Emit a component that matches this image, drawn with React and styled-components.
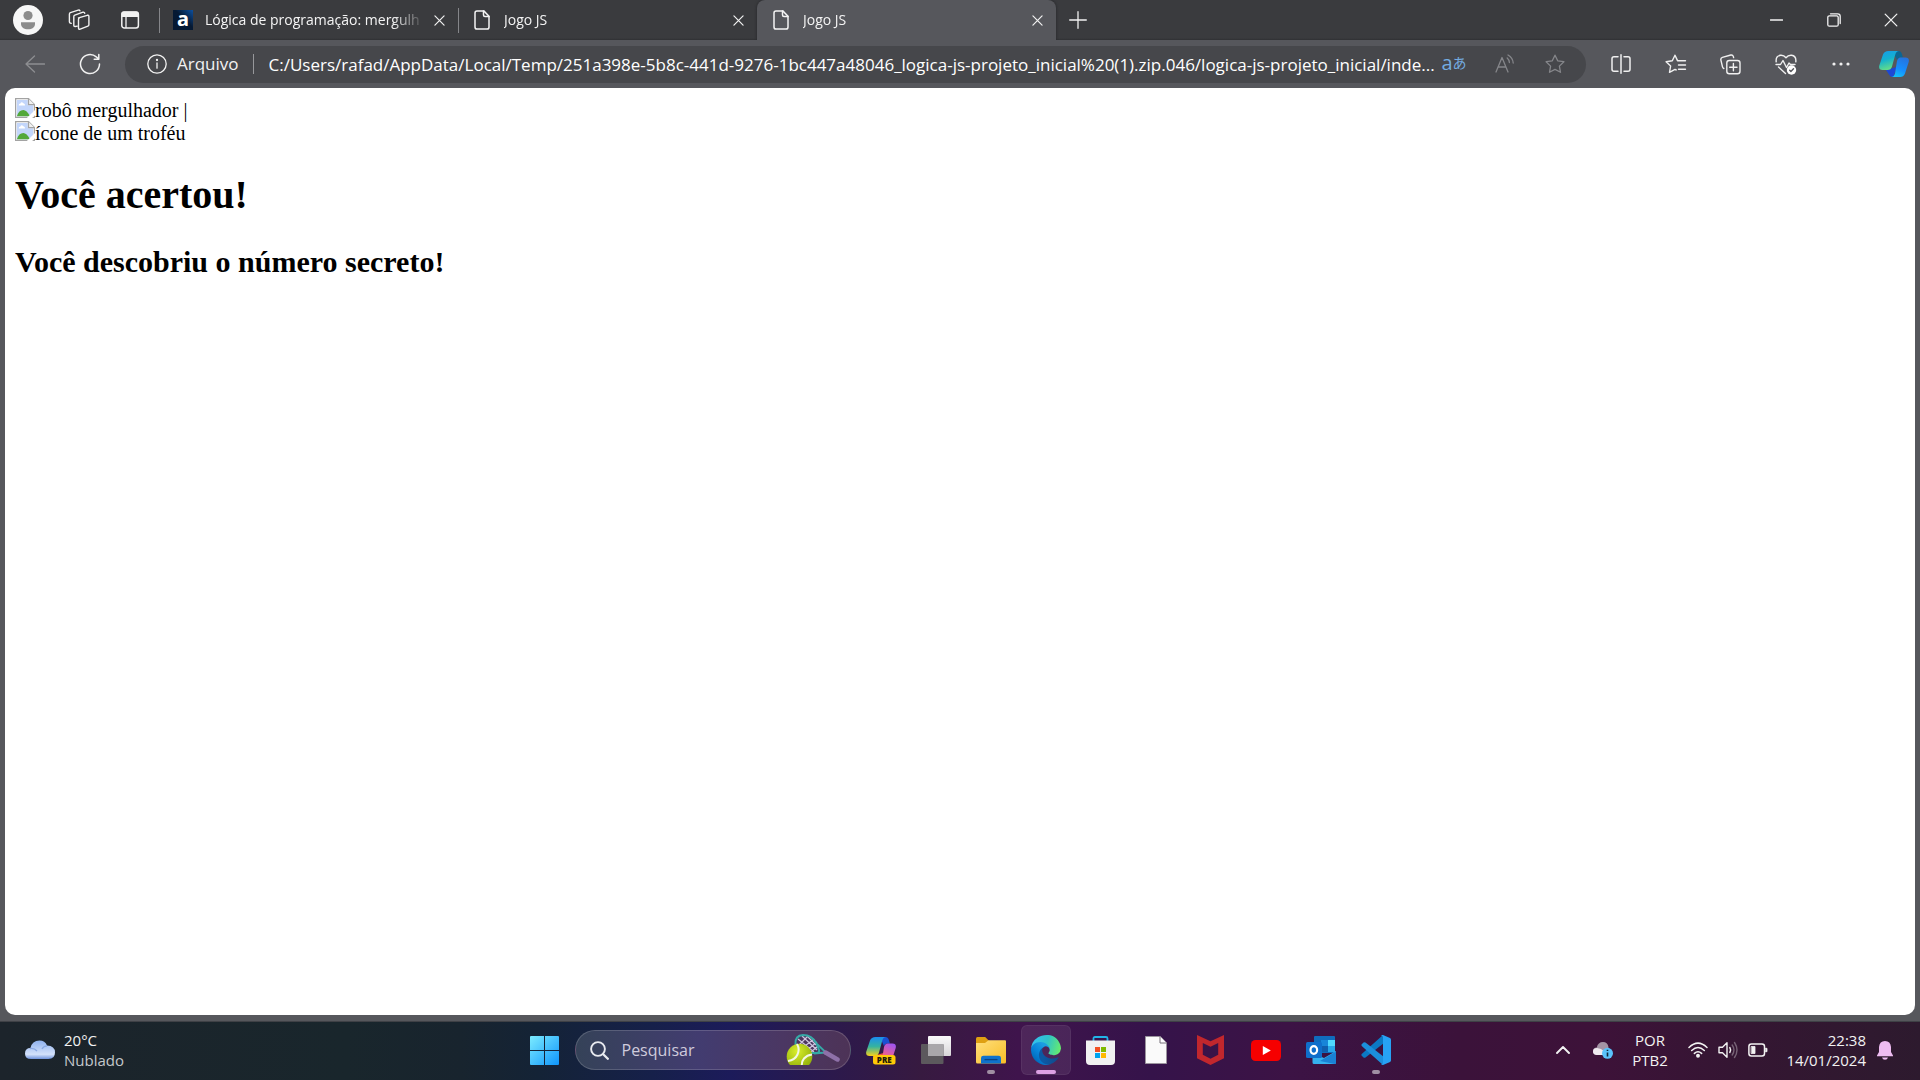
import React from "react";
import styled, { createGlobalStyle, css } from "styled-components";

const ui = '"Open Sans", "Noto Sans", sans-serif';

const GlobalStyle = createGlobalStyle`
  * { box-sizing: border-box; }
  body { margin: 0; background: #56575c; font-family: ${ui}; }
  svg { display: block; flex: none; }
  button, input { font: inherit; color: inherit; }
`;

/* ---------- shared parts ---------- */

const Window = styled.div`
  display: flex;
  flex-direction: column;
  height: 100vh;
  overflow: hidden;
`;

const PlainButton = styled.button`
  display: flex;
  align-items: center;
  justify-content: center;
  flex: none;
  padding: 0;
  border: 0;
  background: transparent;
  color: #f2f2f2;
`;

/* ---------- tab strip ---------- */

const TabStrip = styled.header`
  display: flex;
  height: 40px;
  flex: none;
  background: linear-gradient(#3a3b3e 0 38px, #2f3033);
  color: #f4f4f4;
`;

const StripTools = styled.div`
  display: flex;
  align-items: center;
  padding-left: 2px;
  width: 159px;
  flex: none;
`;

const StripButton = styled(PlainButton)`
  width: 51px;
  height: 40px;
`;

const Tabs = styled.div`
  display: flex;
  flex: 0 1 897px;
  min-width: 0;
`;

const Tab = styled.div`
  display: flex;
  align-items: center;
  flex: 1 1 0;
  min-width: 0;
  padding: 0 7px 0 14px;
  gap: 12px;
  position: relative;
  font-size: 14px;
  line-height: 20px;
  ${(p) =>
    p.$divider &&
    css`
      &::before {
        content: "";
        position: absolute;
        left: 0;
        top: 8px;
        width: 1px;
        height: 25px;
        background: #85868a;
      }
    `}
  ${(p) =>
    p.$active &&
    css`
      background: #56575c;
      border-radius: 8px 8px 0 0;
      box-shadow: 0 0 3px #222326;
      clip-path: inset(0 -4px 0 -4px);
    `}
`;

const TabTitle = styled.span`
  flex: 1;
  min-width: 0;
  white-space: nowrap;
  mask-image: linear-gradient(to right, #000 calc(100% - 32px), transparent);
`;

const TabClose = styled(PlainButton)`
  width: 24px;
  height: 24px;
  margin-left: -10px;
`;

const Favicon = styled.span`
  display: flex;
  align-items: center;
  justify-content: center;
  width: 20px;
  height: 20px;
  flex: none;
  background: linear-gradient(225deg, #0c50a0, #051933 45%);
  color: #fff;
  font: 700 20px/20px "Noto Sans", sans-serif;
  padding-bottom: 3px;
`;

const FileSlot = styled.span`
  display: flex;
  justify-content: center;
  width: 20px;
  flex: none;
`;

const NewTab = styled(PlainButton)`
  width: 44px;
  height: 40px;
`;

const WindowButtons = styled.div`
  display: flex;
  margin-left: auto;
  padding-right: 1px;
`;

const WindowButton = styled(PlainButton)`
  width: 57px;
  height: 39px;
`;

/* ---------- address toolbar ---------- */

const Toolbar = styled.nav`
  display: flex;
  align-items: center;
  height: 48px;
  flex: none;
  padding: 0 0 0 7px;
  background: #56575c;
`;

const ToolButton = styled(PlainButton)`
  width: ${(p) => (p.$edge ? 52 : 55)}px;
  height: 38px;
  color: ${(p) => (p.$dim ? "#8d8e91" : "#f0f0f0")};
`;

const BarButton = styled(PlainButton)`
  width: 50px;
  height: 36px;
  color: #85868a;
`;

const TranslateButton = styled(PlainButton)`
  width: 32px;
  height: 36px;
  margin-right: 10px;
  padding-bottom: 3px;
  color: #74ace0;
  font: 20px/24px "Open Sans", "Noto Sans CJK JP", sans-serif;

  small {
    font-size: 14px;
  }
`;

const AddressBar = styled.form`
  display: flex;
  align-items: center;
  flex: 1;
  min-width: 0;
  height: 37px;
  margin: 0 7px 0 8px;
  padding: 0 6px 0 22px;
  border-radius: 19px;
  background: #46474b;
  color: #fff;
  font-size: 17px;
  line-height: 24px;
`;

const SiteInfo = styled(PlainButton)`
  gap: 10px;
  padding-right: 14px;
  font-size: 17px;
  line-height: 24px;
`;

const BarDivider = styled.span`
  width: 1px;
  height: 20px;
  flex: none;
  margin-right: 15px;
  background: #97989b;
`;

const UrlInput = styled.input`
  flex: 1;
  min-width: 0;
  height: 30px;
  padding: 0;
  border: 0;
  outline: 0;
  background: transparent;
  font-size: 17px;
`;

/* ---------- page ---------- */

const PageFrame = styled.div`
  display: flex;
  flex: 1;
  min-height: 0;
  padding: 0 5px 6px;
  background: #56575c;
`;

const Page = styled.main`
  flex: 1;
  overflow: auto;
  padding: 10px;
  border-radius: 10px;
  background: #fff;
  color: #000;
  font: 20px/25px "Liberation Serif", serif;
`;

const ImageLine = styled.div`
  display: flex;
  height: 23px;

  span {
    white-space: pre;
  }
`;

const Title = styled.h1`
  margin: 28px 0 27px;
  font-size: 40px;
  line-height: 46px;
`;

const Subtitle = styled.h2`
  margin: 0;
  font-size: 30px;
  line-height: 34px;
`;

/* ---------- taskbar ---------- */

const Taskbar = styled.footer`
  display: grid;
  grid-template-columns: 1fr auto 1fr;
  align-items: center;
  height: 59px;
  flex: none;
  padding-bottom: 2px;
  color: #fff;
  border-top: 1px solid #3f4146;
  background: linear-gradient(
    to right,
    #1c242b 0,
    #19262c 18%,
    #18242e 24%,
    #142336 28%,
    #16204a 34%,
    #1c1b5a 38%,
    #2b194d 43%,
    #371a40 48%,
    #3f144c 53%,
    #35134a 60%,
    #3c1345 67%,
    #3b123a 76%,
    #3d1239 83%,
    #341632 91%,
    #2d1a2e 100%
  );
`;

const Weather = styled(PlainButton)`
  justify-self: start;
  gap: 9px;
  margin-left: 25px;
  text-align: left;
  font-size: 15px;
  line-height: 20px;

  em {
    display: block;
    font-style: normal;
    color: #c4c8cb;
  }
`;

const Dock = styled.div`
  display: flex;
  align-items: center;
  gap: 5px;
`;

const DockButton = styled(PlainButton)`
  position: relative;
  width: 50px;
  height: 50px;
  border-radius: 6px;
  ${(p) =>
    p.$current &&
    css`
      background: rgba(255, 255, 255, 0.08);
      box-shadow: inset 0 0 0 1px rgba(255, 255, 255, 0.06);
    `}
  ${(p) =>
    p.$running &&
    css`
      &::after {
        content: "";
        position: absolute;
        bottom: 1px;
        width: ${p.$current ? 20 : 8}px;
        height: 4px;
        border-radius: 2px;
        background: ${p.$current ? "#dda0e4" : "#a08fa3"};
      }
    `}
`;

const SearchBox = styled.label`
  display: flex;
  align-items: center;
  gap: 13px;
  width: 276px;
  height: 40px;
  padding: 0 10px 0 14px;
  border: 1px solid rgba(255, 255, 255, 0.16);
  border-radius: 20px;
  background: linear-gradient(to right, #354258, #423c70 45%, #4b3763 75%, #4d3357);

  input {
    flex: 1;
    min-width: 0;
    padding: 0;
    border: 0;
    outline: 0;
    background: transparent;
    font-size: 16px;
    line-height: 24px;
  }

  input::placeholder {
    color: #cfcbdc;
    opacity: 1;
  }
`;

const Tray = styled.div`
  display: flex;
  align-items: center;
  justify-self: end;
  padding-right: 16px;
`;

const TrayButton = styled(PlainButton)`
  width: ${(p) => p.$width}px;
  height: 48px;
  gap: 10px;
`;

const TrayText = styled(PlainButton)`
  width: ${(p) => p.$width}px;
  display: block;
  text-align: ${(p) => p.$align};
  font-size: 15px;
  line-height: 20px;

  span {
    display: block;
  }
`;

/* ---------- icons ---------- */

const Line = ({ w = 20, h = 20, sw = 1.3, children, box }) => (
  <svg
    width={w}
    height={h}
    viewBox={box || `0 0 ${w} ${h}`}
    fill="none"
    stroke="currentColor"
    strokeWidth={sw}
    strokeLinecap="round"
    strokeLinejoin="round"
    aria-hidden="true"
  >
    {children}
  </svg>
);

const ProfileIcon = () => (
  <svg width="30" height="30" viewBox="0 0 30 30">
    <circle cx="15" cy="15" r="15" fill="#f7f7f7" />
    <circle cx="15" cy="10.5" r="4.6" fill="#8c8c8c" />
    <path d="M8 17.2h14v1.5c0 3.6-3 5.6-7 5.6s-7-2-7-5.600z" fill="#8c8c8c" />
  </svg>
);

const WorkspacesIcon = () => (
  <Line w={22} h={22} sw={1.4}>
    <path d="M10.500 8.900 19.200 6.300q1.700-.4 1.700 1.200v8.200q0 1.100-1 1.500l-7.700 3q-1.700.5-1.700-1.200v-8.600q0-1.100 1-1.500" />
    <path d="M9.300 17.100 7.300 17.500q-1.500.2-1.500-1.300V7.700q0-1.100 1-1.500l8.200-3q1.400-.3 1.800 1" />
    <path d="M3.200 14.300 2.200 14q-.8-.3-.8-1.300V5.200q0-1.100 1-1.500l7.800-2.600q1.300-.3 1.700.7" />
  </Line>
);

const TabActionsIcon = () => (
  <svg width="20" height="20" viewBox="0 0 20 20">
    <rect x="1.800" y="2" width="16.600" height="16" rx="2.500" fill="none" stroke="#f2f2f2" strokeWidth="1.500" />
    <path d="M1.500 3.500q0-2 2-2h13q2 0 2 2V7h-17z" fill="#f2f2f2" />
    <path d="M6 7v11" stroke="#f2f2f2" strokeWidth="1.300" />
  </svg>
);

const FileIcon = () => (
  <Line w={16} h={20} sw={1.5}>
    <path d="M3 .9h6.800l5.200 5.300V17q0 2.100-2 2.100H3q-2 0-2-2.100V2.900Q1 .9 3 .9z" />
    <path d="M9.500 1v4q0 1.500 1.500 1.500h4" />
  </Line>
);

const CloseIcon = ({ size = 11, sw = 1.3 }) => (
  <Line w={size} h={size} box="0 0 12 12" sw={sw}>
    <path d="m1 1 10 10M11 1 1 11" />
  </Line>
);

const BackIcon = () => (
  <Line w={20} h={18}>
    <path d="M9.500 1 1 9l8.500 8M1 9h18.500" />
  </Line>
);

const RefreshIcon = () => (
  <Line w={22} h={22} sw={1.500}>
    <path d="M20.500 11a9.500 9.500 0 1 1-3.200-7.100L19.800 6M19.800 1.600V6.200h-4.600" />
  </Line>
);

const InfoIcon = () => (
  <Line w={20} h={20}>
    <circle cx="10" cy="10" r="9.200" />
    <path d="M10 9v5.200" />
    <circle cx="10" cy="6" r=".5" fill="currentColor" />
  </Line>
);

const ReadAloudIcon = () => (
  <Line w={20} h={20}>
    <path d="M1 18 7 3.500 13 18M3.200 13h7.600M12.200 4q2 1.700 2.200 4.500M13 1q4.800 2.700 5.200 8" />
  </Line>
);

const starPath = "m10 1.200 2.700 5.600 6.200.9-4.500 4.400 1.100 6.200L10 15.400l-5.500 2.900 1.100-6.200L1.100 7.700l6.200-.9z";

const StarIcon = () => (
  <Line>
    <path d={starPath} />
  </Line>
);

const SplitIcon = () => (
  <Line w={20} h={20} sw={1.500}>
    <path d="M10 .8v18.400M7 2.800H3q-2 0-2 2v10.400q0 2 2 2h4M13 2.800h4q2 0 2 2v10.400q0 2-2 2h-4" />
  </Line>
);

const FavoritesIcon = () => (
  <Line w={22} h={20} sw={1.400}>
    <path d="M12.500 6.600 10 1.200 7.300 6.800l-6.200.9 4.500 4.400-1.100 6.200 5.500-2.900 1.200.6M12.500 6.800H20.500M13.500 11h7M13.500 15.200h7" />
  </Line>
);

const CollectionsIcon = () => (
  <Line w={21} h={21} sw={1.400}>
    <rect x="6.800" y="6.500" width="13.200" height="13.300" rx="2.500" />
    <path d="M13.400 9.500v7.300M9.700 13.200H17M3.800 14.500q-1-.4-1.300-1.600L.9 6.100Q.5 4 2.400 3.400L10.800 1q1.900-.4 2.500 1.400l.3 1.200" />
  </Line>
);

const HealthIcon = () => (
  <svg width="22" height="21" viewBox="0 0 22 21" fill="none" stroke="currentColor" strokeWidth="1.400" strokeLinecap="round" strokeLinejoin="round">
    <path d="M1.200 7.800Q.5 2 5.500 1.300 8.800 1 11 3.800 13.200 1 16.500 1.300 21.500 2 20.800 7.800M3.500 13l7 6.500M1 10.500h4.500L8 6.500l3.500 7L14 9l1.500 1.500H20" />
    <circle cx="16.500" cy="16" r="4.700" fill="#fff" stroke="none" />
    <path d="m14.700 16.200 1.200 1.200 2.600-2.700" stroke="#56575c" />
  </svg>
);

const DotsIcon = () => (
  <svg width="18" height="4" viewBox="0 0 18 4" fill="currentColor">
    <circle cx="2" cy="2" r="1.600" />
    <circle cx="9" cy="2" r="1.600" />
    <circle cx="16" cy="2" r="1.600" />
  </svg>
);

const CopilotIcon = ({ pre }) => {
  const id = pre ? "pre" : "bar";
  return (
    <svg width="30" height="30" viewBox="0 0 30 30">
      <defs>
        <linearGradient id={`${id}-a`} x1="0" y1="0" x2={pre ? 0 : 0.3} y2="1">
          <stop offset="0" stopColor={pre ? "#1a8df0" : "#179bea"} />
          <stop offset=".5" stopColor={pre ? "#35b3a0" : "#14b1cf"} />
          <stop offset="1" stopColor={pre ? "#f6d21c" : "#61dc8b"} />
        </linearGradient>
        <linearGradient id={`${id}-b`} x1=".7" y1="0" x2=".3" y2="1">
          <stop offset="0" stopColor={pre ? "#a155ee" : "#2673dd"} />
          <stop offset=".6" stopColor={pre ? "#ec5f91" : "#158fff"} />
          <stop offset="1" stopColor={pre ? "#ff9c62" : "#15c1f6"} />
        </linearGradient>
      </defs>
      <path d="M14 2h5.500q2.500 0 3.400 3l1 3.500h-3q-2.200 0-3 2.500z" fill={pre ? "#1950d2" : "#0b6693"} />
      <path d="m7 21 3 4.500q1.200 2.500 3.500 2.500h1l3-10z" fill={pre ? "#ef5440" : "#1d48d5"} />
      <path d="M9.500 2H20q-2.800.2-3.700 3.500L13 17.500q-1 3.500-4.500 3.500h-5Q-.7 21 .3 16.500L4 5.500Q5.300 2 9.500 2z" fill={`url(#${id}-a)`} />
      <path d="M21.500 8.500h5q4.200 0 3.200 4.500L26 24.500q-1.300 3.500-5 3.500h-9q3 0 4-3.500L18 12q1-3.500 3.500-3.500z" fill={`url(#${id}-b)`} />
      {pre && (
        <>
          <rect x="7" y="20" width="22.500" height="9.500" rx="2.500" fill="#ffc907" />
          <text x="18.300" y="27.500" textAnchor="middle" fontFamily="Open Sans, sans-serif" fontWeight="800" fontSize="8" fill="#241b09">
            PRE
          </text>
        </>
      )}
    </svg>
  );
};

const BrokenImage = () => (
  <svg width="20" height="20" viewBox="0 0 16 16">
    <path d="M.5.500h10.300l4.700 4.700v10.300H.5z" fill="#fff" stroke="#a3a3a3" />
    <path d="M1.500 1.500h8.700v4.300h4.300v8.700h-13z" fill="#c3d6fb" />
    <path d="M3 6q-.2-1.600 1.300-1.700Q5.200 2.500 6.700 4.200 8.200 4.400 8 6z" fill="#fff" />
    <path d="M1.500 14.500q1.500-5 5.200-5 2.600 0 5.300 5z" fill="#52a83a" />
    <path d="M10.800.5v4.700h4.700" fill="#f2f2f2" stroke="#a3a3a3" />
    <path d="M9 16.500 16.500 9v4.200L13.200 16.500z" fill="#fff" />
  </svg>
);

const CloudIcon = () => (
  <svg width="30" height="20" viewBox="0 0 30 20">
    <defs>
      <linearGradient id="cloud" x1="0" y1="0" x2="0" y2="1">
        <stop offset="0" stopColor="#8fb2ee" />
        <stop offset=".75" stopColor="#d3e1fa" />
        <stop offset="1" stopColor="#6f93dc" />
      </linearGradient>
    </defs>
    <path d="M6 19q-6 0-6-5.500T5.500 8Q7 .5 14.500.5 20 .5 22 5.500q8 .3 8 7T23 19z" fill="url(#cloud)" />
    <path d="M5 8.500q4.500-.5 7 2.500M17 9q1.500-3 5-3.200" stroke="#88a8e3" strokeWidth="1.300" fill="none" />
  </svg>
);

const StartIcon = () => (
  <svg width="29" height="29" viewBox="0 0 29 29">
    <defs>
      <linearGradient id="start" gradientUnits="userSpaceOnUse" x1="0" y1="0" x2="29" y2="29">
        <stop offset="0" stopColor="#7cecff" />
        <stop offset="1" stopColor="#0f95fb" />
      </linearGradient>
    </defs>
    <path d="M1 0h13v14H0V1q0-1 1-1zM15 0h13q1 0 1 1v13H15zM0 15h14v14H1q-1 0-1-1zM15 15h14v13q0 1-1 1H15z" fill="url(#start)" />
  </svg>
);

const SearchIcon = () => (
  <svg width="19" height="19" viewBox="0 0 19 19" fill="none" stroke="#e9ebf0" strokeLinecap="round">
    <circle cx="8" cy="8" r="6.900" strokeWidth="1.900" />
    <path d="m13.200 13.200 4.600 4.600" strokeWidth="2.300" />
  </svg>
);

const TennisIcon = () => (
  <svg width="54" height="32" viewBox="0 0 54 32">
    <defs>
      <radialGradient id="ball" cx=".4" cy=".3" r=".75">
        <stop offset="0" stopColor="#d9ee2b" />
        <stop offset="1" stopColor="#8dab08" />
      </radialGradient>
      <clipPath id="ballClip">
        <rect width="54" height="31" />
      </clipPath>
    </defs>
    <path d="m12 5 16 13M16 2l15 14M21 2l9 9M10 10l10 9M12 12l9-9M15 15 28 5M20 17l11-9M25 18l7-6" stroke="#cfc6df" strokeWidth="1.200" />
    <path d="M9.500 10Q9 1.500 17 1q9 0 13.500 8.500l2.500 6.500q.8 3-2.500 3h-6Q10 19 9.500 10z" fill="none" stroke="#35a9a6" strokeWidth="2" />
    <path d="m31 10 9 8.500L28 19.500" fill="none" stroke="#35a9a6" strokeWidth="1.800" />
    <path d="m39.500 18.500 12 7" stroke="#8e70a8" strokeWidth="4.500" strokeLinecap="round" />
    <g clipPath="url(#ballClip)">
      <circle cx="13.500" cy="22.500" r="12.800" fill="url(#ball)" />
      <path d="M2 27q7-1 9.500-6.500T11 10M16 34q-1-6 2-9.500t8-4" fill="none" stroke="#f3f7e4" strokeWidth="2" />
    </g>
  </svg>
);

const TaskViewIcon = () => (
  <svg width="30" height="28" viewBox="0 0 30 28">
    <defs>
      <linearGradient id="tv" x1="0" y1="0" x2="0" y2="1">
        <stop offset="0" stopColor="#fafafa" />
        <stop offset="1" stopColor="#d8d6d9" />
      </linearGradient>
    </defs>
    <rect x="7" y="0" width="23" height="20" rx="1" fill="url(#tv)" />
    <rect x="0" y="8" width="22.500" height="20" rx="1" fill="#5c595d" />
    <path d="M7 8h15.500v12H7z" fill="#a9a7aa" />
  </svg>
);

const FolderIcon = () => (
  <svg width="30" height="27" viewBox="0 0 30 27">
    <defs>
      <linearGradient id="folder" x1="0" y1="0" x2="1" y2="1">
        <stop offset="0" stopColor="#ffdf7c" />
        <stop offset="1" stopColor="#f8bd26" />
      </linearGradient>
    </defs>
    <path d="M0 1.500Q0 0 1.500 0h7.700l3.500 3.500V10H0z" fill="#dfa012" />
    <path d="M0 6h9l3.500-2.700H29q1 0 1 1V25q0 1.500-1.500 1.500h-27Q0 26.500 0 25z" fill="url(#folder)" />
    <path d="M5 26.500V21q0-2.300 2.500-2.300h15q2.500 0 2.500 2.300v5.500z" fill="#0f72cc" />
    <path d="M8.500 22.600h13" stroke="#0a4383" strokeWidth="1.300" />
  </svg>
);

const EdgeIcon = () => (
  <svg width="30" height="30" viewBox="0 0 256 256">
    <defs>
      <linearGradient id="edge1" x1=".25" y1=".7" x2=".97" y2=".7">
        <stop offset="0" stopColor="#0c59a4" />
        <stop offset="1" stopColor="#114a8b" />
      </linearGradient>
      <linearGradient id="edge2" x1=".8" y1=".3" x2=".3" y2=".95">
        <stop offset="0" stopColor="#1b9de2" />
        <stop offset=".5" stopColor="#0883d9" />
        <stop offset="1" stopColor="#0067b8" />
      </linearGradient>
      <linearGradient id="edge3" x1="0" y1=".4" x2="1" y2=".6">
        <stop offset="0" stopColor="#35c1f1" />
        <stop offset=".5" stopColor="#2ec2c9" />
        <stop offset="1" stopColor="#66eb6e" />
      </linearGradient>
    </defs>
    <path d="M231 190a94 94 0 0 1-11 5 102 102 0 0 1-36 6c-47 0-89-32-89-74a31 31 0 0 1 17-27c-43 2-54 46-54 72 0 74 68 81 82 81 8 0 20-2 27-4l1-1a128 128 0 0 0 67-53 4 4 0 0 0-4-5z" fill="url(#edge1)" />
    <path d="M106 241a79 79 0 0 1-23-21 81 81 0 0 1 29-120c3-1 8-4 15-4a32 32 0 0 1 26 13 32 32 0 0 1 6 19c0 0 25-80-80-80C35 48 0 90 0 126a130 130 0 0 0 12 56 128 128 0 0 0 156 67 75 75 0 0 1-62-8z" fill="url(#edge2)" />
    <path d="M152 149c-1 1-3 3-3 6s2 6 5 8c15 11 44 9 44 9a63 63 0 0 0 32-9 65 65 0 0 0 26-47C256 92 247 76 240 62 196-24 95-1 60 19A128 128 0 0 0 0 126c1-36 37-66 80-66 3 0 23 0 42 10a73 73 0 0 1 31 29c6 11 7 24 7 30 0 5-2 13-8 20z" fill="url(#edge3)" />
  </svg>
);

const StoreIcon = () => (
  <svg width="29" height="29" viewBox="0 0 29 29">
    <path d="M7.500 6V2.500q0-1.500 1.500-1.500h11q1.500 0 1.500 1.500V6" fill="none" stroke="#22b4e8" strokeWidth="1.800" />
    <path d="M0 4.500h29V25q0 4-4 4H4q-4 0-4-4z" fill="#f1f1f1" />
    <path d="M9 11h5v5H9z" fill="#f25022" />
    <path d="M15 11h5v5h-5z" fill="#7fba00" />
    <path d="M9 17h5v5H9z" fill="#00a4ef" />
    <path d="M15 17h5v5h-5z" fill="#ffb900" />
  </svg>
);

const DocumentIcon = () => (
  <svg width="22" height="28" viewBox="0 0 22 28">
    <path d="M.5.500h14.700L21.500 7v20.500H.5z" fill="#fafafa" stroke="#9b949e" />
    <path d="M15 .5V7h6.500" fill="#fff" stroke="#77717a" />
  </svg>
);

const ShieldIcon = () => (
  <svg width="27" height="30" viewBox="0 0 27 30">
    <path d="m0 0 13.500 6.200L27 0v23.300L13.500 30 0 23.300zM5.800 8v11.700l7.700 4 7.700-4V8l-7.700 3.800z" fill="#c1272d" fillRule="evenodd" />
  </svg>
);

const YoutubeIcon = () => (
  <svg width="30" height="21" viewBox="0 0 30 21">
    <rect width="30" height="21" rx="4.500" fill="#f60000" />
    <path d="m11.800 6 8 4.500-8 4.500z" fill="#fff" />
  </svg>
);

const OutlookIcon = () => (
  <svg width="30" height="28" viewBox="0 0 30 28">
    <path d="M8 1q0-1 1-1h19q1 0 1 1v16H8z" fill="#0f6cbd" />
    <path d="M15 4h7v6h-7z" fill="#1785d8" />
    <path d="M22 4h7v6h-7z" fill="#50d9ff" />
    <path d="M15 10h7v6h-7z" fill="#0f5fae" />
    <path d="M22 10h7v6h-7z" fill="#28a8ea" />
    <path d="M6.500 17 18 22l12-7v11.500q0 1.500-1.500 1.500H8q-1.500 0-1.500-1.500z" fill="#35b1ee" />
    <path d="M30 15.500 14 25l14.500 3q1.500 0 1.500-1.500z" fill="#1a82d4" />
    <rect y="6" width="16" height="16" rx="1.500" fill="#0f6fcb" />
    <ellipse cx="7.800" cy="14" rx="3.300" ry="3.800" fill="none" stroke="#fff" strokeWidth="2.200" />
  </svg>
);

const CodeIcon = () => (
  <svg width="30" height="30" viewBox="0 0 30 30">
    <path d="M22 0 1 18.800q-1.300 1.200 0 2.200l1.500 1.500q1 .7 2 0L23 8z" fill="#0b79c4" />
    <path d="M22 30 1 11.200q-1.300-1.200 0-2.200l1.500-1.500q1-.7 2 0L23 22z" fill="#1b8fdc" />
    <path d="M22 0 29 3q1 .5 1 1.700v20.600q0 1.200-1 1.700l-7 3q-1.600.3-2-.5 2 .3 2-1.800V2.300Q22 .2 20 .5q.5-.8 2-.5z" fill="#27a2f4" />
  </svg>
);

const ChevronIcon = () => (
  <Line w={14} h={8} sw={1.900}>
    <path d="m1 7 6-6 6 6" />
  </Line>
);

const CloudInfoIcon = () => (
  <svg width="20" height="17" viewBox="0 0 20 17">
    <path d="M5 12.500H4q-4 0-4-3.500Q0 5.700 3.800 5.500 5 0 10 0q4.500 0 5.500 5v7.500z" fill="#a494a5" />
    <path d="M3.500 13Q0 12.700 0 9.500 0 6 4 6q4 .2 8 4l-1 3z" fill="#efe9ef" />
    <circle cx="14.500" cy="11.300" r="5.500" fill="#5ac2fb" />
    <path d="M14.500 10.500v4M14.500 7.800v1.300" stroke="#10283c" strokeWidth="1.600" />
  </svg>
);

const WifiIcon = () => (
  <Line w={20} h={16} sw={1.500}>
    <path d="M1 5.500q9-8.800 18 0M3.700 8.500q6.300-6 12.600 0M6.400 11.400q3.600-3.400 7.200 0" />
    <circle cx="10" cy="13.800" r="1.200" fill="currentColor" />
  </Line>
);

const VolumeIcon = () => (
  <Line w={20} h={18} sw={1.400}>
    <path d="M1 6.200h3.500l4.500-4.400v14.400l-4.500-4.400H1z" />
    <path d="M11.800 6.500q1.600 2.500 0 5" />
    <path d="M14.200 4q3.500 5 0 10M16.500 1.500q5 7.500 0 15" opacity=".35" />
  </Line>
);

const BatteryIcon = () => (
  <Line w={20} h={14} sw={1.500}>
    <rect x=".9" y="1" width="15.600" height="12" rx="2.500" />
    <path d="M3.500 3.500H7v7H3.500zM17.500 5.300h1.500v3.400h-1.500z" fill="currentColor" strokeWidth=".8" />
  </Line>
);

const BellIcon = () => (
  <svg width="16" height="19" viewBox="0 0 16 19" fill="#eebcf1">
    <path d="M8 0q5.500.2 6 6v5l2 3.500v.7H0v-.7L2 11V6Q2.500.2 8 0zM5 16.500h6q-.7 2.300-3 2.300t-3-2.300z" />
  </svg>
);

/* ---------- data ---------- */

const tabs = [
  { title: "Lógica de programação: mergulh", alura: true, divider: true },
  { title: "Jogo JS", divider: true },
  { title: "Jogo JS", active: true },
];

const tools = [
  ["Tela dividida", SplitIcon],
  ["Favoritos", FavoritesIcon],
  ["Coleções", CollectionsIcon],
  ["Desempenho", HealthIcon],
  ["Configurações", DotsIcon],
];

const PreviewIcon = () => <CopilotIcon pre />;

const apps = [
  { name: "Copilot", Icon: PreviewIcon },
  { name: "Visão de tarefas", Icon: TaskViewIcon },
  { name: "Explorador", Icon: FolderIcon, running: true },
  { name: "Edge", Icon: EdgeIcon, running: true, current: true },
  { name: "Store", Icon: StoreIcon },
  { name: "Documento", Icon: DocumentIcon },
  { name: "McAfee", Icon: ShieldIcon },
  { name: "YouTube", Icon: YoutubeIcon },
  { name: "Outlook", Icon: OutlookIcon },
  { name: "Visual Studio Code", Icon: CodeIcon, running: true },
];

export default function App() {
  return (
    <Window>
      <GlobalStyle />
      <TabStrip>
        <StripTools>
          <StripButton aria-label="Perfil"><ProfileIcon /></StripButton>
          <StripButton aria-label="Workspaces"><WorkspacesIcon /></StripButton>
          <StripButton aria-label="Ações da guia"><TabActionsIcon /></StripButton>
        </StripTools>
        <Tabs>
          {tabs.map((t, i) => (
            <Tab key={i} $active={t.active} $divider={t.divider}>
              {t.alura ? <Favicon>a</Favicon> : <FileSlot><FileIcon /></FileSlot>}
              <TabTitle>{t.title}</TabTitle>
              <TabClose aria-label="Fechar guia"><CloseIcon /></TabClose>
            </Tab>
          ))}
        </Tabs>
        <NewTab aria-label="Nova guia">
          <Line w={18} h={18}><path d="M9 .7v16.600M.7 9h16.600" /></Line>
        </NewTab>
        <WindowButtons>
          <WindowButton aria-label="Minimizar">
            <Line w={13} h={2}><path d="M.5 1h12" /></Line>
          </WindowButton>
          <WindowButton aria-label="Restaurar">
            <Line w={14} h={14}>
              <rect x=".8" y="2.800" width="10.400" height="10.400" rx="1.500" />
              <path d="M3.500.8h7.200q2.500 0 2.500 2.500v7.200" />
            </Line>
          </WindowButton>
          <WindowButton aria-label="Fechar"><CloseIcon size={14} sw={1.1} /></WindowButton>
        </WindowButtons>
      </TabStrip>

      <Toolbar>
        <ToolButton $dim aria-label="Voltar"><BackIcon /></ToolButton>
        <ToolButton aria-label="Atualizar"><RefreshIcon /></ToolButton>
        <AddressBar onSubmit={(e) => e.preventDefault()}>
          <SiteInfo type="button"><InfoIcon />Arquivo</SiteInfo>
          <BarDivider />
          <UrlInput
            aria-label="Endereço"
            defaultValue="C:/Users/rafad/AppData/Local/Temp/251a398e-5b8c-441d-9276-1bc447a48046_logica-js-projeto_inicial%20(1).zip.046/logica-js-projeto_inicial/inde..."
          />
          <TranslateButton type="button" aria-label="Traduzir">a<small>あ</small></TranslateButton>
          <BarButton type="button" aria-label="Ler em voz alta"><ReadAloudIcon /></BarButton>
          <BarButton type="button" aria-label="Adicionar aos favoritos"><StarIcon /></BarButton>
        </AddressBar>
        {tools.map(([name, Icon]) => (
          <ToolButton key={name} aria-label={name}><Icon /></ToolButton>
        ))}
        <ToolButton $edge aria-label="Copilot"><CopilotIcon /></ToolButton>
      </Toolbar>

      <PageFrame>
        <Page>
          <ImageLine><BrokenImage /><span>robô mergulhador |</span></ImageLine>
          <ImageLine><BrokenImage /><span>ícone de um troféu</span></ImageLine>
          <Title>Você acertou!</Title>
          <Subtitle>Você descobriu o número secreto!</Subtitle>
        </Page>
      </PageFrame>

      <Taskbar>
        <Weather>
          <CloudIcon />
          <span>20°C<em>Nublado</em></span>
        </Weather>
        <Dock>
          <DockButton aria-label="Iniciar"><StartIcon /></DockButton>
          <SearchBox>
            <SearchIcon />
            <input type="text" placeholder="Pesquisar" aria-label="Pesquisar" />
            <TennisIcon />
          </SearchBox>
          {apps.map(({ name, Icon, running, current }) => (
            <DockButton key={name} aria-label={name} $running={running} $current={current}>
              <Icon />
            </DockButton>
          ))}
        </Dock>
        <Tray>
          <TrayButton $width={40} aria-label="Ícones ocultos"><ChevronIcon /></TrayButton>
          <TrayButton $width={40} aria-label="OneDrive"><CloudInfoIcon /></TrayButton>
          <TrayText $width={54} $align="center"><span>POR</span><span>PTB2</span></TrayText>
          <TrayButton $width={102} aria-label="Rede, volume e bateria">
            <WifiIcon /><VolumeIcon /><BatteryIcon />
          </TrayButton>
          <TrayText $width={87} $align="right"><span>22:38</span><span>14/01/2024</span></TrayText>
          <TrayButton $width={38} aria-label="Notificações"><BellIcon /></TrayButton>
        </Tray>
      </Taskbar>
    </Window>
  );
}
